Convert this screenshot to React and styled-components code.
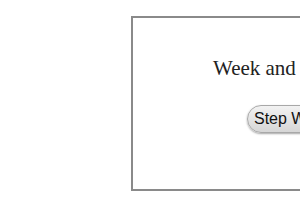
import React from "react";
import styled, { createGlobalStyle } from "styled-components";

const Global = createGlobalStyle`
  html, body { margin: 0; padding: 0; background: #fff; overflow: hidden; }
  body { font-family: "Liberation Serif", "Times New Roman", serif; }
`;

const Page = styled.div`
  width: 300px;
  height: 210px;
  padding: 16px 0 0 131px;
  box-sizing: border-box;
  overflow: hidden;
`;

const Panel = styled.div`
  width: 320px;
  height: 175px;
  box-sizing: border-box;
  border: 2px solid #8a8a8a;
  background: #fff;
  padding: 38px 0 0 80px;
  display: flex;
  flex-direction: column;
  align-items: flex-start;
  gap: 25px;
`;

const Title = styled.div`
  font-family: "Liberation Serif", "Times New Roman", serif;
  font-size: 21px;
  line-height: 24px;
  color: #222;
  white-space: nowrap;
`;

const ToggleButton = styled.button`
  margin-left: 34px;
  font-family: "Liberation Sans", Arial, sans-serif;
  font-size: 16px;
  line-height: 18px;
  color: #111;
  padding: 4px 6px 4px 6px;
  border: 1px solid #a8a8a8;
  border-radius: 14px;
  background: linear-gradient(#f2f2f2, #d6d6d6);
  box-shadow: 0 1px 2px rgba(0, 0, 0, 0.35);
  white-space: nowrap;
`;

export default function App() {
  return (
    <>
      <Global />
      <Page>
        <Panel>
          <Title>Week and Weekend View</Title>
          <ToggleButton>Step Week</ToggleButton>
        </Panel>
      </Page>
    </>
  );
}
